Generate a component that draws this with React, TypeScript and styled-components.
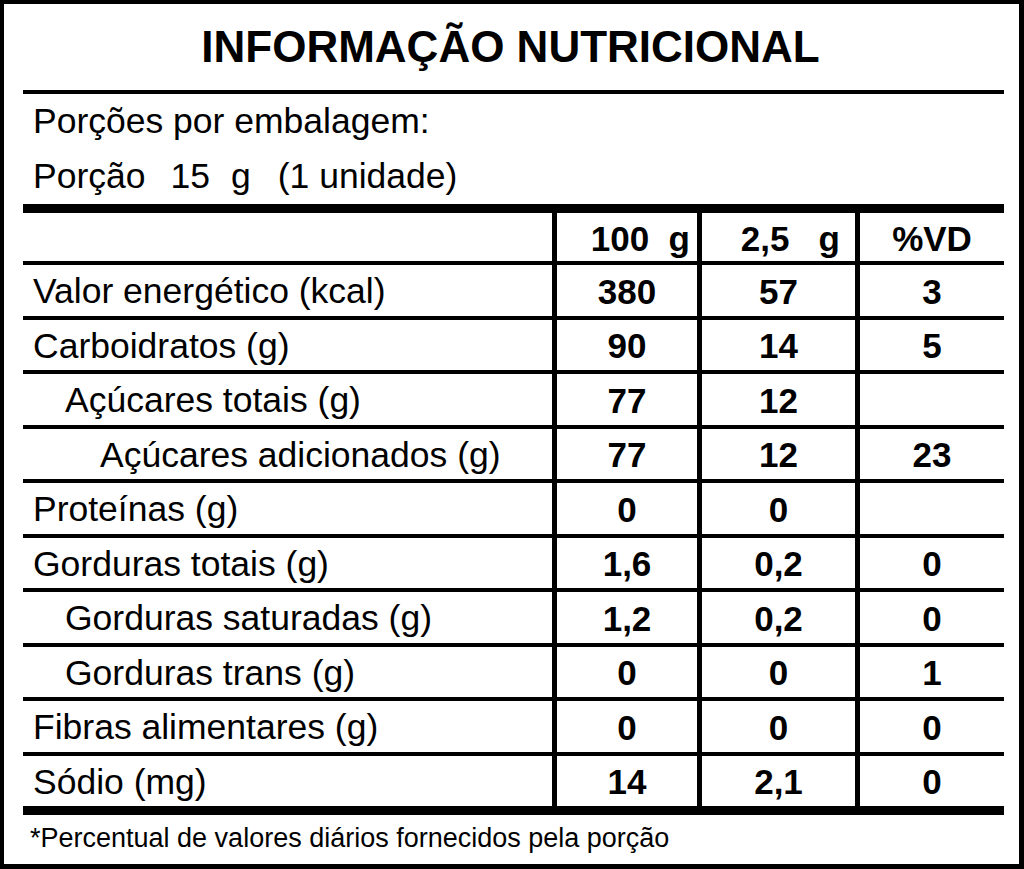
import React from 'react';
import styled, { createGlobalStyle } from 'styled-components';

interface Nutrient {
  label: string,
  level: 0 | 1 | 2,
  per100: string,
  perPortion: string,
  vd: string,
}

const rows: Array<Nutrient> = [
  { label: 'Valor energético (kcal)', level: 0, per100: '380', perPortion: '57', vd: '3' },
  { label: 'Carboidratos (g)', level: 0, per100: '90', perPortion: '14', vd: '5' },
  { label: 'Açúcares totais (g)', level: 1, per100: '77', perPortion: '12', vd: '' },
  { label: 'Açúcares adicionados (g)', level: 2, per100: '77', perPortion: '12', vd: '23' },
  { label: 'Proteínas (g)', level: 0, per100: '0', perPortion: '0', vd: '' },
  { label: 'Gorduras totais (g)', level: 0, per100: '1,6', perPortion: '0,2', vd: '0' },
  { label: 'Gorduras saturadas (g)', level: 1, per100: '1,2', perPortion: '0,2', vd: '0' },
  { label: 'Gorduras trans (g)', level: 1, per100: '0', perPortion: '0', vd: '1' },
  { label: 'Fibras alimentares (g)', level: 0, per100: '0', perPortion: '0', vd: '0' },
  { label: 'Sódio (mg)', level: 0, per100: '14', perPortion: '2,1', vd: '0' },
];

const indent = [10, 42, 77];

const App = () => {
  return (
    <>
      <GlobalStyle />
      <Label>
        <Title>INFORMAÇÃO NUTRICIONAL</Title>
        <Rule />
        <Serving>
          <ServingLine>Porções por embalagem:</ServingLine>
          <ServingLine>
            Porção<Gap $w={25}>15</Gap><Gap $w={21}>g</Gap><Gap $w={27}>(1 unidade)</Gap>
          </ServingLine>
        </Serving>
        <ThickRule />
        <Table>
          <HeaderRow>
            <LabelCell $level={0} />
            <HeadCell $align="right" $pad={7}>{'100  g'}</HeadCell>
            <HeadCell $align="right" $pad={15}>{'2,5   g'}</HeadCell>
            <HeadCell $align="center" $pad={0}>%VD</HeadCell>
          </HeaderRow>
          {rows.map((item) => (
            <Row key={item.label}>
              <LabelCell $level={item.level}>{item.label}</LabelCell>
              <ValueCell>{item.per100}</ValueCell>
              <ValueCell>{item.perPortion}</ValueCell>
              <ValueCell>{item.vd}</ValueCell>
            </Row>
          ))}
        </Table>
        <ThickRule />
        <Footnote>*Percentual de valores diários fornecidos pela porção</Footnote>
      </Label>
    </>
  );
};

const GlobalStyle = createGlobalStyle`
  html, body {
    margin: 0;
    padding: 0;
    background: #ffffff;
  }
  body {
    font-family: "Liberation Sans", Arial, sans-serif;
    color: #000000;
  }
`;

const Label = styled.div`
  box-sizing: border-box;
  width: 1024px;
  height: 869px;
  border: solid #000;
  border-width: 4px 5px 5px 4px;
  padding: 0 15px 0 19px;
  display: flex;
  flex-direction: column;
  background: #fff;
`;

const Title = styled.div`
  height: 86px;
  display: flex;
  align-items: center;
  justify-content: center;
  font-size: 44px;
  font-weight: bold;
  line-height: 1;
  padding-right: 6px;
  box-sizing: border-box;
`;

const Rule = styled.div`
  height: 4px;
  background: #000;
`;

const ThickRule = styled.div`
  height: 9px;
  background: #000;
`;

const Serving = styled.div`
  height: 110px;
  display: flex;
  flex-direction: column;
`;

const ServingLine = styled.div`
  height: 55px;
  display: flex;
  align-items: center;
  padding-left: 10px;
  font-size: 35.5px;
  white-space: pre;
`;

const Gap = styled.span<{ $w: number }>`
  margin-left: ${(p) => p.$w}px;
`;

const Table = styled.div`
  display: flex;
  flex-direction: column;
`;

const Row = styled.div`
  display: grid;
  grid-template-columns: 529px 145px 158px 149px;
  height: 54.5px;
  box-sizing: border-box;
  border-bottom: 4px solid #000;
  &:last-child {
    height: 50.5px;
    border-bottom: none;
  }
`;

const HeaderRow = styled(Row)`
  height: 52px;
`;

const LabelCell = styled.div<{ $level: number }>`
  display: flex;
  align-items: center;
  padding: 3px 0 0 ${(p) => indent[p.$level]}px;
  font-size: 35.5px;
  white-space: nowrap;
`;

const ValueCell = styled.div`
  display: flex;
  align-items: center;
  justify-content: center;
  padding-top: 3px;
  border-left: 5px solid #000;
  font-size: 35px;
  font-weight: bold;
`;

const HeadCell = styled(ValueCell)<{ $align: 'right' | 'center', $pad: number }>`
  justify-content: ${(p) => (p.$align === 'right' ? 'flex-end' : 'center')};
  padding-right: ${(p) => p.$pad}px;
  white-space: pre;
`;

const Footnote = styled.div`
  flex: 1;
  display: flex;
  align-items: center;
  padding-left: 7px;
  padding-bottom: 2px;
  font-size: 27px;
`;

export default App;
